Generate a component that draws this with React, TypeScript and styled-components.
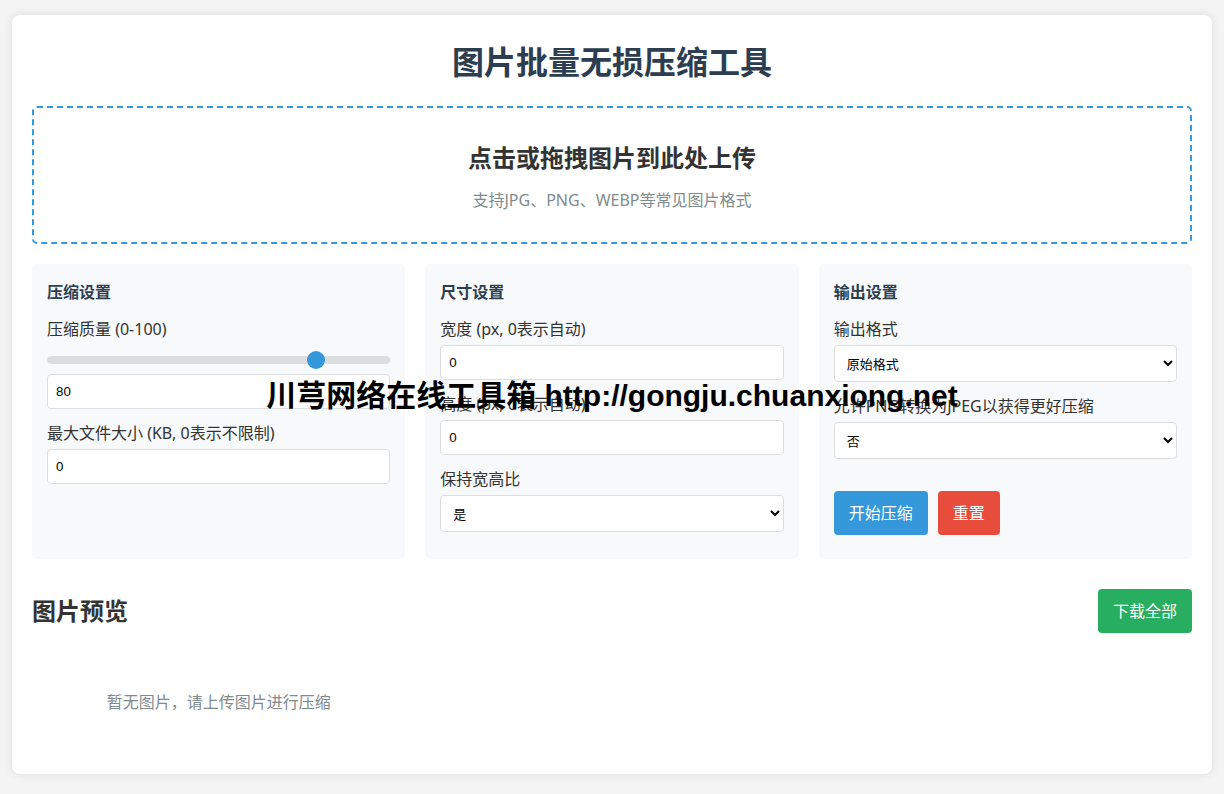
import React, { useState } from "react";
import styled, { createGlobalStyle } from "styled-components";

const GlobalStyle = createGlobalStyle`
  * { box-sizing: border-box; }
  body {
    margin: 0;
    padding: 15px 0;
    background: #f4f4f4;
    font-family: "Noto Sans", "Noto Sans CJK SC", sans-serif;
    color: #333;
  }
`;

const Card = styled.div`
  position: relative;
  max-width: 1200px;
  margin: 0 auto;
  padding: 20px;
  background: #fff;
  border-radius: 8px;
  box-shadow: 0 0 10px rgba(0, 0, 0, 0.1);
`;

const Title = styled.h1`
  margin: 8px 0 25px;
  font-size: 32px;
  line-height: 38px;
  font-weight: 700;
  text-align: center;
  color: #2c3e50;
`;

const UploadZone = styled.div`
  border: 2px dashed #3498db;
  border-radius: 5px;
  padding: 30px;
  text-align: center;
  cursor: pointer;
  margin-bottom: 20px;
`;

const UploadTitle = styled.h3`
  margin: 0 0 10px;
  font-size: 24px;
  line-height: 40px;
  font-weight: 700;
  color: #333;
`;

const UploadHint = styled.p`
  margin: 0;
  font-size: 16px;
  line-height: 24px;
  color: #7f8c8d;
`;

const SettingsGrid = styled.div`
  display: grid;
  grid-template-columns: repeat(3, 1fr);
  gap: 20px;
  margin-bottom: 30px;
`;

const Panel = styled.div`
  background: #f8f9fa;
  border-radius: 5px;
  padding: 15px;
`;

const PanelTitle = styled.h3`
  margin: 0 0 12px;
  font-size: 16px;
  line-height: 26px;
  font-weight: 700;
  color: #2c3e50;
`;

const Group = styled.div`
  margin-bottom: 12px;
`;

const Label = styled.label`
  display: block;
  margin-bottom: 4px;
  font-size: 16px;
  line-height: 24px;
  color: #333;
`;

const TextInput = styled.input`
  display: block;
  width: 100%;
  padding: 8px;
  border: 1px solid #ddd;
  border-radius: 4px;
  background: #fff;
  font-family: "Liberation Sans", Arial, sans-serif;
  font-size: 13.33px;
  line-height: 17px;
  color: #000;
  outline: none;
`;

const Select = styled.select`
  display: block;
  width: 100%;
  height: 37px;
  padding: 0 8px;
  border: 1px solid #ddd;
  border-radius: 4px;
  background: #fff;
  font-family: "Noto Sans CJK SC", sans-serif;
  font-size: 13px;
  color: #000;
  outline: none;
`;

const Range = styled.input`
  display: block;
  width: 100%;
  height: 18px;
  margin: 10px 0 5px;
  -webkit-appearance: none;
  appearance: none;
  background: transparent;
  outline: none;

  &::-webkit-slider-runnable-track {
    height: 8px;
    border-radius: 4px;
    background: #ddd;
  }
  &::-webkit-slider-thumb {
    -webkit-appearance: none;
    width: 18px;
    height: 18px;
    margin-top: -5px;
    border-radius: 50%;
    background: #3498db;
    border: none;
  }
`;

const ButtonRow = styled.div`
  display: flex;
  gap: 10px;
  margin-top: 32px;
`;

const Button = styled.button<{ $color: string }>`
  padding: 10px 15px;
  border: none;
  border-radius: 4px;
  background: ${({ $color }) => $color};
  color: #fff;
  font-family: "Noto Sans", "Noto Sans CJK SC", sans-serif;
  font-size: 16px;
  line-height: 24px;
  cursor: pointer;
`;

const PreviewHeader = styled.div`
  display: flex;
  align-items: center;
  justify-content: space-between;
  margin-bottom: 17px;
`;

const PreviewTitle = styled.h2`
  margin: 0;
  font-size: 24px;
  line-height: 32px;
  font-weight: 700;
  color: #333;
`;

const PreviewGrid = styled.div`
  display: grid;
  grid-template-columns: repeat(auto-fill, minmax(300px, 1fr));
  gap: 20px;
`;

const Empty = styled.p`
  margin: 0;
  padding: 40px 0;
  font-size: 16px;
  line-height: 24px;
  text-align: center;
  color: #7f8c8d;
`;

const Watermark = styled.div`
  position: absolute;
  left: 0;
  right: 0;
  top: 363px;
  text-align: center;
  pointer-events: none;
  font-family: "Liberation Sans", "Noto Sans CJK SC", sans-serif;
  font-size: 30px;
  line-height: 36px;
  font-weight: 700;
  color: #000;
`;

export default function App() {
  const [quality, setQuality] = useState(80);

  return (
    <>
      <GlobalStyle />
      <Card>
        <Title>图片批量无损压缩工具</Title>

        <UploadZone>
          <UploadTitle>点击或拖拽图片到此处上传</UploadTitle>
          <UploadHint>支持JPG、PNG、WEBP等常见图片格式</UploadHint>
        </UploadZone>

        <SettingsGrid>
          <Panel>
            <PanelTitle>压缩设置</PanelTitle>
            <Group>
              <Label>压缩质量 (0-100)</Label>
              <Range
                type="range"
                min={0}
                max={100}
                value={quality}
                onChange={(e) => setQuality(Number(e.target.value))}
              />
              <TextInput
                type="number"
                value={quality}
                onChange={(e) => setQuality(Number(e.target.value))}
              />
            </Group>
            <Group>
              <Label>最大文件大小 (KB, 0表示不限制)</Label>
              <TextInput type="number" defaultValue={0} />
            </Group>
          </Panel>

          <Panel>
            <PanelTitle>尺寸设置</PanelTitle>
            <Group>
              <Label>宽度 (px, 0表示自动)</Label>
              <TextInput type="number" defaultValue={0} />
            </Group>
            <Group>
              <Label>高度 (px, 0表示自动)</Label>
              <TextInput type="number" defaultValue={0} />
            </Group>
            <Group>
              <Label>保持宽高比</Label>
              <Select defaultValue="yes">
                <option value="yes">是</option>
                <option value="no">否</option>
              </Select>
            </Group>
          </Panel>

          <Panel>
            <PanelTitle>输出设置</PanelTitle>
            <Group>
              <Label>输出格式</Label>
              <Select defaultValue="original">
                <option value="original">原始格式</option>
                <option value="jpeg">JPEG</option>
                <option value="png">PNG</option>
                <option value="webp">WEBP</option>
              </Select>
            </Group>
            <Group>
              <Label>允许PNG转换为JPEG以获得更好压缩</Label>
              <Select defaultValue="no">
                <option value="no">否</option>
                <option value="yes">是</option>
              </Select>
            </Group>
            <ButtonRow>
              <Button $color="#3498db">开始压缩</Button>
              <Button $color="#e74c3c">重置</Button>
            </ButtonRow>
          </Panel>
        </SettingsGrid>

        <PreviewHeader>
          <PreviewTitle>图片预览</PreviewTitle>
          <Button $color="#27ae60">下载全部</Button>
        </PreviewHeader>

        <PreviewGrid>
          <Empty>暂无图片，请上传图片进行压缩</Empty>
        </PreviewGrid>

        <Watermark>川芎网络在线工具箱 http://gongju.chuanxiong.net</Watermark>
      </Card>
    </>
  );
}
